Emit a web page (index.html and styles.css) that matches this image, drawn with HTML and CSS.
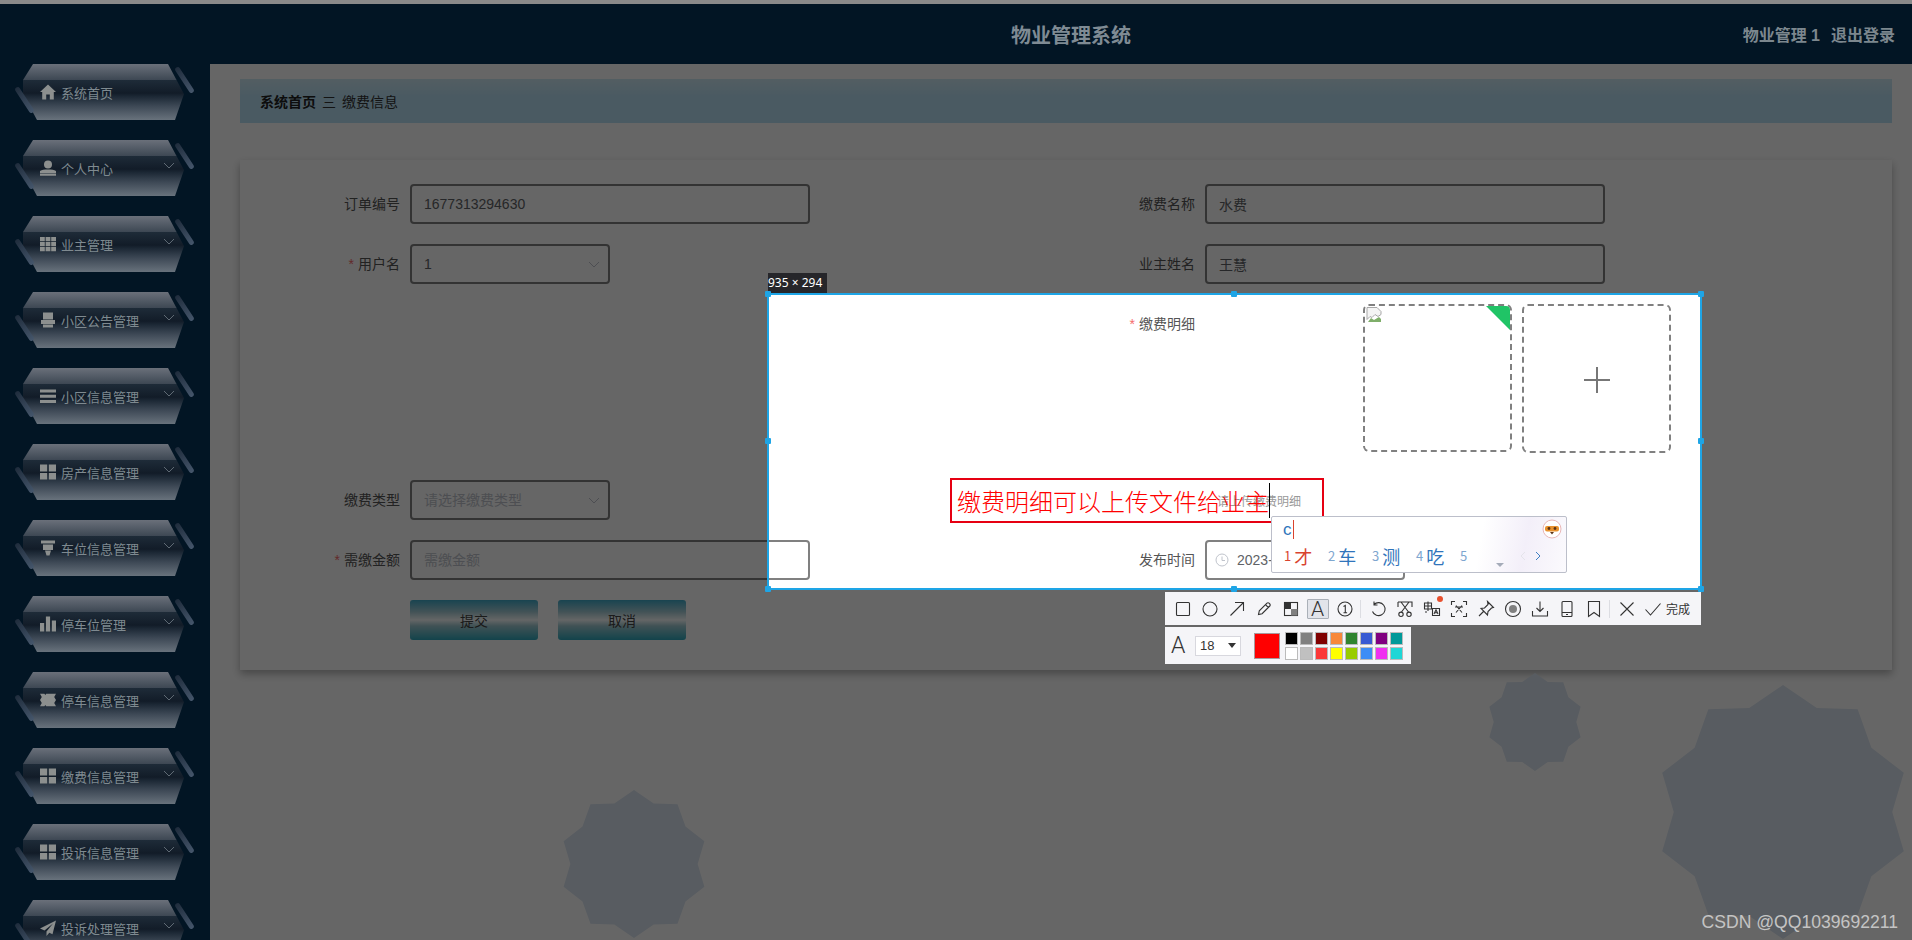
FILE: index.html
```html
<!DOCTYPE html>
<html>
<head>
  <title>物业管理系统</title>
  <link rel="stylesheet" href="styles.css">
</head>
<body>
  <svg class="sprite">
    <symbol id="i-home" viewBox="0 0 16 16"><path d="M8 0.5L0 8h2.2v7.5h4V10.5h3.6v5h4V8H16z"/></symbol>
    <symbol id="i-user" viewBox="0 0 16 16"><circle cx="8" cy="4.5" r="4"/><path d="M0 11c2-1.500 4-1.500 8-1.500s6 0 8 1.500v2H0zM0 13.600h16v2.200H0z"/></symbol>
    <symbol id="i-table" viewBox="0 0 16 16"><path d="M0 1h4.800v4.200H0zM5.600 1h4.800v4.200H5.600zM11.200 1H16v4.200h-4.800zM0 6h4.800v4.200H0zM5.600 6h4.800v4.200H5.600zM11.200 6H16v4.200h-4.800zM0 11h4.800v4.200H0zM5.600 11h4.800v4.200H5.600zM11.200 11H16v4.200h-4.800z"/></symbol>
    <symbol id="i-notice" viewBox="0 0 16 16"><path d="M3 0.500h10v7H3zM1 8h14v4H1zM3 12.500h10v3H3z"/></symbol>
    <symbol id="i-list" viewBox="0 0 16 16"><path d="M0 1.500h16v3H0zM0 6.800h16v3H0zM0 12h16v3H0z"/></symbol>
    <symbol id="i-grid" viewBox="0 0 16 16"><path d="M0 0.500h7.200v7H0zM8.800 0.500H16v7H8.800zM0 9h7.200v6.500H0zM8.800 9H16v6.500H8.800z"/></symbol>
    <symbol id="i-car" viewBox="0 0 16 16"><path d="M1 0.500h14v3H1zM3 4.500h10V10H3zM5 10.500h6L9.500 15.500h-3z"/></symbol>
    <symbol id="i-bars" viewBox="0 0 16 16"><path d="M0 7h4.200v8.500H0zM5.900 0.500h4.200v15H5.900zM11.800 4.500H16v11h-4.200z"/></symbol>
    <symbol id="i-ticket" viewBox="0 0 18 16"><path d="M0 1h5l1 1.500 1-1.500h11l-2 3.500 2 3.500-2 3.500 2 3.500H7l-1-1.500-1 1.500H0l2-3.500L0 8l2-3.500z"/></symbol>
    <symbol id="i-plane" viewBox="0 0 16 16"><path d="M16 0.500L0 8.500l4.500 2L13 3.500 6.500 11.500v4.500l2.800-3.200 3.200 1.400z"/></symbol>
    <symbol id="i-down" viewBox="0 0 12 7"><path d="M1 1l5 5 5-5" fill="none" stroke="currentColor" stroke-width="1"/></symbol>
  </svg>

  <header class="topbar">
    <div class="top-strip"></div>
    <div class="topbar-inner">
      <div class="topbar-title">物业管理系统</div>
      <div class="topbar-user"><span>物业管理 1</span><span>退出登录</span></div>
    </div>
  </header>

  <div class="layout">
    <nav class="sidebar">
      <a class="menu-item"><i class="menu-slash"></i><svg class="menu-icon"><use href="#i-home"/></svg><span>系统首页</span></a>
      <a class="menu-item"><i class="menu-slash"></i><svg class="menu-icon"><use href="#i-user"/></svg><span>个人中心</span><svg class="menu-arrow"><use href="#i-down"/></svg></a>
      <a class="menu-item"><i class="menu-slash"></i><svg class="menu-icon"><use href="#i-table"/></svg><span>业主管理</span><svg class="menu-arrow"><use href="#i-down"/></svg></a>
      <a class="menu-item"><i class="menu-slash"></i><svg class="menu-icon"><use href="#i-notice"/></svg><span>小区公告管理</span><svg class="menu-arrow"><use href="#i-down"/></svg></a>
      <a class="menu-item"><i class="menu-slash"></i><svg class="menu-icon"><use href="#i-list"/></svg><span>小区信息管理</span><svg class="menu-arrow"><use href="#i-down"/></svg></a>
      <a class="menu-item"><i class="menu-slash"></i><svg class="menu-icon"><use href="#i-grid"/></svg><span>房产信息管理</span><svg class="menu-arrow"><use href="#i-down"/></svg></a>
      <a class="menu-item"><i class="menu-slash"></i><svg class="menu-icon"><use href="#i-car"/></svg><span>车位信息管理</span><svg class="menu-arrow"><use href="#i-down"/></svg></a>
      <a class="menu-item"><i class="menu-slash"></i><svg class="menu-icon"><use href="#i-bars"/></svg><span>停车位管理</span><svg class="menu-arrow"><use href="#i-down"/></svg></a>
      <a class="menu-item"><i class="menu-slash"></i><svg class="menu-icon"><use href="#i-ticket"/></svg><span>停车信息管理</span><svg class="menu-arrow"><use href="#i-down"/></svg></a>
      <a class="menu-item"><i class="menu-slash"></i><svg class="menu-icon"><use href="#i-grid"/></svg><span>缴费信息管理</span><svg class="menu-arrow"><use href="#i-down"/></svg></a>
      <a class="menu-item"><i class="menu-slash"></i><svg class="menu-icon"><use href="#i-grid"/></svg><span>投诉信息管理</span><svg class="menu-arrow"><use href="#i-down"/></svg></a>
      <a class="menu-item"><i class="menu-slash"></i><svg class="menu-icon"><use href="#i-plane"/></svg><span>投诉处理管理</span><svg class="menu-arrow"><use href="#i-down"/></svg></a>
    </nav>

    <main class="content">
      <div class="breadcrumb"><b>系统首页</b><span class="crumb-sep">三</span><span>缴费信息</span></div>

      <form class="card">
        <div class="field"><label class="field-label">订单编号</label><input class="text-input" value="1677313294630" readonly></div>
        <div class="field"><label class="field-label">缴费名称</label><input class="text-input" value="水费" readonly></div>

        <div class="field"><label class="field-label"><em>*</em>用户名</label>
          <div class="select-box"><input class="text-input" value="1" readonly><svg class="select-arrow"><use href="#i-down"/></svg></div>
        </div>
        <div class="field"><label class="field-label">业主姓名</label><input class="text-input" value="王慧" readonly></div>

        <div class="field"></div>
        <div class="field field-upload"><label class="field-label"><em>*</em>缴费明细</label>
          <div class="upload-list">
            <div class="upload-card upload-done">
              <svg class="broken-img" viewBox="0 0 16 16"><path d="M1 .5h10l4 4v3l-3 2-3-2-3 3-2-1-3 3z" fill="#f4f4f4" stroke="#a8a8a8"/><path d="M2 15l3-4 3 2 5-3 2 2v3z" fill="#7fae6a"/></svg>
            </div>
            <div class="upload-card upload-add"><span class="plus"></span></div>
          </div>
        </div>

        <div class="field"><label class="field-label">缴费类型</label>
          <div class="select-box"><input class="text-input" placeholder="请选择缴费类型" readonly><svg class="select-arrow"><use href="#i-down"/></svg></div>
        </div>
        <div class="field"><span class="upload-tip">请上传缴费明细</span></div>

        <div class="field"><label class="field-label"><em>*</em>需缴金额</label><input class="text-input" placeholder="需缴金额" readonly></div>
        <div class="field"><label class="field-label">发布时间</label>
          <div class="select-box">
            <svg class="clock" viewBox="0 0 14 14"><circle cx="7" cy="7" r="6" fill="none" stroke="currentColor"/><path d="M7 3.500V7.500h3" fill="none" stroke="currentColor"/></svg>
            <input class="text-input date-input" value="2023-02-25 16:21:34" readonly>
          </div>
        </div>

        <div class="form-actions">
          <button class="glass-btn" type="button">提交</button>
          <button class="glass-btn" type="button">取消</button>
        </div>
      </form>
    </main>
  </div>

  <div class="star star-a"></div>
  <div class="star star-b"></div>
  <div class="star star-c"></div>

  <!-- screenshot tool on top of the page -->
  <div class="selection">
    <div class="size-tag">935 × 294</div>
    <i class="handle h-tl"></i><i class="handle h-tm"></i><i class="handle h-tr"></i>
    <i class="handle h-ml"></i><i class="handle h-mr"></i>
    <i class="handle h-bl"></i><i class="handle h-bm"></i><i class="handle h-br"></i>

    <div class="annotation"><span class="annotation-text">缴费明细可以上传文件给业主</span></div>

    <div class="ime">
      <div class="ime-input"><span>c</span></div>
      <div class="ime-candidates">
        <span class="cand cand-first"><small>1</small>才</span>
        <span class="cand"><small>2</small>车</span>
        <span class="cand"><small>3</small>测</span>
        <span class="cand"><small>4</small>吃</span>
        <span class="cand"><small>5</small></span>
      </div>
      <i class="ime-more"></i>
      <svg class="ime-prev" viewBox="0 0 6 10"><path d="M5 1L1 5l4 4" fill="none" stroke="#e4e4ea"/></svg>
      <svg class="ime-next" viewBox="0 0 6 10"><path d="M1 1l4 4-4 4" fill="none" stroke="#3f7fc4"/></svg>
      <svg class="ime-logo" viewBox="0 0 20 20">
        <circle cx="10" cy="10" r="9" fill="#fff" stroke="#e9b7b7"/>
        <rect x="3" y="7" width="14" height="5.500" rx="2" fill="#e8912d"/>
        <circle cx="7" cy="9.500" r="1.400" fill="#5b3416"/><circle cx="13" cy="9.500" r="1.400" fill="#5b3416"/>
        <path d="M8 13h4l-2 2.500z" fill="#5b3416"/>
      </svg>
    </div>

    <div class="toolbar">
      <span class="tool"><svg viewBox="0 0 18 18"><rect x="2.500" y="2.500" width="13" height="13" rx="1"/></svg></span>
      <span class="tool"><svg viewBox="0 0 18 18"><circle cx="9" cy="9" r="7"/></svg></span>
      <span class="tool"><svg viewBox="0 0 18 18"><path d="M2.500 15.500L15.500 2.500M7 2.500h8.500V11"/></svg></span>
      <span class="tool"><svg viewBox="0 0 18 18"><path d="M3.500 14.500l.8-3.600 7.700-7.700a1.400 1.400 0 0 1 2 0l.8.800a1.400 1.400 0 0 1 0 2l-7.700 7.700zM10.500 4.700l2.800 2.800"/></svg></span>
      <span class="tool"><svg viewBox="0 0 18 18"><rect x="2.500" y="2.500" width="13" height="13"/><path class="solid" d="M2.500 2.500H9V9H2.500z"/><path class="solid-grey" d="M9 9h6.500v6.500H9z"/></svg></span>
      <span class="tool tool-active">A</span>
      <span class="tool"><svg viewBox="0 0 18 18"><circle cx="9" cy="9" r="7"/><path d="M7.500 6.500L9.300 5.500V12.800M7.500 12.800h3.600"/></svg></span>
      <i class="tool-divider"></i>
      <span class="tool"><svg viewBox="0 0 18 18"><path d="M5 4.500a6.500 6.500 0 1 1-1.500 7M5 1.500v3.500h3.500"/></svg></span>
      <span class="tool"><svg viewBox="0 0 18 18"><path d="M2 2h14v5M2 2v5M5 2l7.500 10M13 2L5.500 12"/><circle cx="5" cy="14.300" r="2.200"/><circle cx="13" cy="14.300" r="2.200"/></svg></span>
      <span class="tool tool-badge"><svg viewBox="0 0 18 18"><path d="M1.500 3h7v6h-7zM5 1.500V11M1.500 6h7M2 12h2M9.500 8.500h7v7h-7z"/><path d="M11 14l2-4.200 2 4.200M11.700 12.800h2.600"/></svg></span>
      <span class="tool"><svg viewBox="0 0 18 18"><path d="M1.500 5V1.500H5M13 1.500h3.500V5M16.500 13v3.500H13M5 16.500H1.500V13M6 5.500l6 7M12 5.500l-6 7M5 7h8"/></svg></span>
      <span class="tool"><svg viewBox="0 0 18 18"><path d="M10.500 1.500l6 6-2 .5-3.500 3.500-.5 3.500-6.500-6.500 3.500-.5L11 4.500zM6.500 11.500L2 16"/></svg></span>
      <span class="tool"><svg viewBox="0 0 18 18"><circle cx="9" cy="9" r="7.500"/><circle class="solid-grey" cx="9" cy="9" r="4"/></svg></span>
      <span class="tool"><svg viewBox="0 0 18 18"><path d="M9 1.500v10M5.500 8L9 11.500 12.500 8M1.500 11v5h15v-5"/></svg></span>
      <span class="tool"><svg viewBox="0 0 18 18"><rect x="4" y="1.500" width="10" height="15" rx="1"/><path d="M4 12.500h10M8 14.500h2"/></svg></span>
      <span class="tool"><svg viewBox="0 0 18 18"><path d="M3.500 1.500h11v15L9 12.500l-5.500 4z"/></svg></span>
      <i class="tool-divider"></i>
      <span class="tool"><svg viewBox="0 0 18 18"><path d="M2.500 2.500l13 13M15.500 2.500l-13 13"/></svg></span>
      <span class="tool tool-done"><svg viewBox="0 0 18 18"><path d="M1.500 9.500l5 5.500L16.500 3.500"/></svg>完成</span>
    </div>

    <div class="text-options">
      <span class="option-letter">A</span>
      <span class="size-select">18<i></i></span>
      <span class="color-current"></span>
      <div class="palette">
        <i class="c-black"></i><i class="c-grey"></i><i class="c-maroon"></i><i class="c-orange"></i><i class="c-green"></i><i class="c-blue"></i><i class="c-purple"></i><i class="c-teal"></i>
        <i class="c-white"></i><i class="c-silver"></i><i class="c-red"></i><i class="c-yellow"></i><i class="c-lime"></i><i class="c-sky"></i><i class="c-pink"></i><i class="c-cyan"></i>
      </div>
    </div>
  </div>

  <div class="watermark">CSDN @QQ1039692211</div>
</body>
</html>
```

FILE: styles.css
```css
body {
  position: relative;
  margin: 0;
  height: 940px;
  overflow: hidden;
  background-color: #fff;
  font-family: "Liberation Sans", "Noto Sans CJK SC", sans-serif;
  font-size: 14px;
  color: #555;
}

.sprite {
  display: none;
}

/* Header */
.topbar {
  position: relative;
  z-index: 3;
  background-color: #021524;
}

.top-strip {
  height: 4px;
  background-color: #8a8a8a;
}

.topbar-inner {
  display: flex;
  align-items: center;
  justify-content: center;
  height: 60px;
  padding-left: 230px;
  box-sizing: border-box;
}

.topbar-title {
  font-size: 20px;
  font-weight: bold;
  color: #7f8b94;
}

.topbar-user {
  position: absolute;
  right: 17px;
  top: 22px;
  display: flex;
  gap: 11px;
  font-size: 16px;
  font-weight: bold;
  color: #7c878e;
}

.layout {
  display: flex;
}

/* Sidebar */
.sidebar {
  position: relative;
  z-index: 3;
  display: flex;
  flex-direction: column;
  flex: none;
  gap: 20px;
  width: 210px;
  height: 876px;
  padding-left: 22px;
  box-sizing: border-box;
  overflow: hidden;
  background-color: #021524;
}

.menu-item {
  position: relative;
  z-index: 0;
  display: flex;
  flex: none;
  align-items: center;
  gap: 5px;
  width: 163px;
  height: 56px;
  padding: 0 10px 0 18px;
  box-sizing: border-box;
  font-size: 13px;
  color: #7f8a90;
}

.menu-item::before {
  content: "";
  position: absolute;
  inset: 0;
  z-index: -1;
  background: linear-gradient(#6a707a, #3e4854 28%, #1e2b38 29%, #121c28 52%, #1c2835 58%, #3d4855 75%, #68727c);
  clip-path: polygon(11px 0, 146px 0, 162px 30px, 153px 100%, 15px 100%, 1px 30px, 1px 16px);
}

.menu-item::after,
.menu-slash {
  content: "";
  position: absolute;
  width: 5px;
  height: 30px;
  border-radius: 3px;
  background: linear-gradient(#1f2c3c, #45566b);
}

.menu-item::after {
  left: 0;
  top: 21px;
  transform: rotate(-33deg);
}

.menu-slash {
  left: 160px;
  top: 1px;
  transform: rotate(-33deg);
}

.menu-icon {
  flex: none;
  width: 16px;
  height: 16px;
  fill: #8c8f8e;
}

.menu-arrow {
  width: 12px;
  height: 7px;
  margin-left: auto;
  margin-bottom: 6px;
  color: #5f6a74;
}

/* Main content, bright colours get dimmed by the selection shadow */
.content {
  flex: 1;
  padding: 15px 20px 0 30px;
}

.breadcrumb {
  display: flex;
  align-items: center;
  height: 44px;
  padding-left: 20px;
  margin-bottom: 37px;
  background: linear-gradient(#cfeaf4, #b9e1f5 40%);
  color: #333;
}

.breadcrumb b {
  color: #222;
}

.crumb-sep {
  margin: 0 6px;
}

.card {
  position: relative;
  display: grid;
  grid-template-columns: 795px 795px;
  row-gap: 20px;
  padding: 24px 0 30px;
  background-color: #fff;
  box-shadow: 0 4px 8px rgba(0, 0, 0, 0.3);
}

.field {
  display: flex;
  align-items: center;
  gap: 10px;
  min-height: 40px;
}

.field-label {
  flex: none;
  width: 160px;
  text-align: right;
  line-height: 40px;
}

.field-label em {
  margin-right: 4px;
  font-style: normal;
  color: #f56c6c;
}

.text-input {
  width: 400px;
  height: 40px;
  padding: 0 12px;
  box-sizing: border-box;
  border: 2px solid #808080;
  border-radius: 4px;
  outline: none;
  background-color: #fff;
  font-family: inherit;
  font-size: 14px;
  color: #606266;
}

.text-input::placeholder {
  color: #c0c4cc;
}

.select-box {
  position: relative;
  width: 200px;
}

.select-box .text-input {
  width: 100%;
}

.select-arrow {
  position: absolute;
  right: 10px;
  top: 17px;
  width: 12px;
  height: 7px;
  color: #c0c4cc;
}

.clock {
  position: absolute;
  left: 10px;
  top: 13px;
  width: 14px;
  height: 14px;
  color: #c0c4cc;
}

.date-input {
  padding-left: 30px;
}

.field-upload {
  align-items: flex-start;
  padding-bottom: 7px;
}

.upload-list {
  display: flex;
  gap: 10px;
  margin-left: 158px;
}

.upload-card {
  position: relative;
  width: 149px;
  height: 148px;
  box-sizing: border-box;
  border: 2px dashed #808080;
  border-radius: 6px;
  overflow: hidden;
}

.upload-done::after {
  content: "";
  position: absolute;
  right: -2px;
  top: -2px;
  width: 28px;
  height: 28px;
  background-color: #20c466;
  clip-path: polygon(0 0, 100% 0, 100% 100%);
}

.broken-img {
  position: absolute;
  left: 1px;
  top: 1px;
  width: 16px;
  height: 16px;
}

.upload-add {
  display: flex;
  align-items: center;
  justify-content: center;
  height: 149px;
}

.plus {
  position: relative;
  top: 1px;
  width: 26px;
  height: 2px;
  background-color: #777;
}

.plus::after {
  content: "";
  position: absolute;
  left: 12px;
  top: -12px;
  width: 2px;
  height: 26px;
  background-color: #777;
}

.upload-tip {
  padding-left: 182px;
  font-size: 12px;
  color: #999;
}

.form-actions {
  display: flex;
  grid-column: 1 / -1;
  gap: 20px;
  padding-left: 170px;
}

.glass-btn {
  width: 128px;
  height: 40px;
  border: none;
  border-radius: 3px;
  background: linear-gradient(#3fa9c8, #a8cfd8 30%, #fbffff 50%, #a0ccd4 65%, #2fa8bc);
  font-family: inherit;
  font-size: 14px;
  color: #444;
}

/* Background stars */
.star {
  position: absolute;
  background-color: #dce6f2;
  clip-path: polygon(50% 0, 63.29% 9.1%, 79.39% 9.55%, 84.79% 24.73%, 97.55% 34.55%, 93% 50%, 97.55% 65.45%, 84.79% 75.27%, 79.39% 90.45%, 63.29% 90.9%, 50% 100%, 36.71% 90.9%, 20.61% 90.45%, 15.21% 75.27%, 2.45% 65.45%, 7% 50%, 2.45% 34.55%, 15.21% 24.73%, 20.61% 9.55%, 36.71% 9.1%);
}

.star-a {
  left: 560px;
  top: 790px;
  width: 148px;
  height: 148px;
}

.star-b {
  left: 1487px;
  top: 673px;
  width: 96px;
  height: 98px;
}

.star-c {
  left: 1656px;
  top: 685px;
  width: 254px;
  height: 254px;
}

/* Screenshot selection: the big shadow dims everything around the hole */
.selection {
  position: absolute;
  z-index: 2;
  left: 767px;
  top: 293px;
  width: 931px;
  height: 293px;
  border: 2px solid #1ea5e6;
  box-shadow: 0 0 0 3000px rgba(0, 0, 0, 0.6);
}

.size-tag {
  position: absolute;
  left: -1px;
  top: -22px;
  width: 59px;
  height: 20px;
  background-color: #26262a;
  font-family: "Noto Sans", sans-serif;
  font-size: 12px;
  line-height: 20px;
  white-space: nowrap;
  color: #fff;
}

.handle {
  position: absolute;
  width: 6px;
  height: 6px;
  border-radius: 1px;
  background-color: #1ea5e6;
}

.h-tl { left: -4px; top: -4px; }
.h-tm { left: 462px; top: -4px; }
.h-tr { right: -4px; top: -4px; }
.h-ml { left: -4px; top: 143px; }
.h-mr { right: -4px; top: 143px; }
.h-bl { left: -4px; bottom: -4px; }
.h-bm { left: 462px; bottom: -4px; }
.h-br { right: -4px; bottom: -4px; }

.annotation {
  position: absolute;
  left: 181px;
  top: 183px;
  width: 374px;
  height: 45px;
  padding-left: 5px;
  box-sizing: border-box;
  border: 2px solid #e60012;
  font-family: "Noto Sans CJK SC", sans-serif;
  font-size: 24px;
  font-weight: 300;
  line-height: 41px;
  white-space: nowrap;
  color: #f00;
}

.annotation-text {
  border-right: 1px solid #000;
}

/* Input method popup */
.ime {
  position: absolute;
  left: 502px;
  top: 221px;
  width: 296px;
  height: 57px;
  box-sizing: border-box;
  border: 1px solid #bcbfca;
  border-radius: 2px;
  background: linear-gradient(100deg, #fff 70%, #f3eff9 85%, #fbfafd);
  color: #2f74bb;
}

.ime-input {
  height: 24px;
  padding: 3px 0 0 11px;
  font-size: 17px;
  line-height: 20px;
}

.ime-input span {
  padding-right: 1px;
  border-right: 1px solid #d9432f;
}

.ime-candidates {
  display: flex;
  gap: 13px;
  padding-left: 12px;
  font-family: "Noto Sans CJK SC", sans-serif;
  font-size: 18px;
  line-height: 24px;
}

.cand {
  display: flex;
  align-items: center;
  gap: 3px;
  min-width: 31px;
}

.cand small {
  font-size: 13px;
  color: #7ea6cf;
}

.cand-first,
.cand-first small {
  color: #d9432f;
}

.ime-more {
  position: absolute;
  left: 224px;
  top: 46px;
  width: 0;
  height: 0;
  border-left: 4px solid transparent;
  border-right: 4px solid transparent;
  border-top: 4px solid #a5acb9;
}

.ime-prev,
.ime-next {
  position: absolute;
  top: 34px;
  width: 6px;
  height: 10px;
}

.ime-prev { left: 248px; }
.ime-next { left: 263px; }

.ime-logo {
  position: absolute;
  left: 270px;
  top: 2px;
  width: 20px;
  height: 20px;
}

/* Screenshot toolbars */
.toolbar {
  position: absolute;
  left: 396px;
  top: 297px;
  display: flex;
  align-items: center;
  width: 536px;
  height: 33px;
  padding-left: 4px;
  box-sizing: border-box;
  background-color: #f5f5f8;
}

.tool {
  display: flex;
  flex: none;
  align-items: center;
  justify-content: center;
  width: 27px;
  height: 20px;
  box-sizing: border-box;
  font-family: Roboto, sans-serif;
  font-size: 21px;
  font-weight: 300;
  color: #333;
}

.tool svg {
  width: 18px;
  height: 18px;
  fill: none;
  stroke: #333;
  stroke-width: 1.1;
}

.tool .solid {
  fill: #333;
  stroke: none;
}

.tool .solid-grey {
  fill: #808080;
  stroke: none;
}

.tool-active {
  width: 22px;
  margin: 0 2.500px;
  border: 1px solid #aab0b8;
  border-radius: 1px;
  background-color: #e2e4ea;
  line-height: 18px;
}

.tool-badge {
  position: relative;
}

.tool-badge::after {
  content: "";
  position: absolute;
  right: 2px;
  top: -3px;
  width: 6px;
  height: 6px;
  border-radius: 50%;
  background-color: #e8502e;
}

.tool-divider {
  flex: none;
  width: 1px;
  height: 18px;
  margin: 0 3px 0 2px;
  background-color: #dcdde2;
}

.tool-done {
  gap: 4px;
  width: auto;
  margin-left: 4px;
  font-family: "Noto Sans CJK SC", sans-serif;
  font-size: 12px;
  font-weight: 400;
}

.text-options {
  position: absolute;
  left: 396px;
  top: 332px;
  display: flex;
  align-items: center;
  width: 246px;
  height: 37px;
  padding-left: 6px;
  box-sizing: border-box;
  background-color: #f5f5f8;
}

.option-letter {
  width: 24px;
  font-family: Roboto, sans-serif;
  font-size: 23px;
  font-weight: 300;
  color: #333;
}

.size-select {
  display: flex;
  align-items: center;
  justify-content: space-between;
  width: 46px;
  height: 20px;
  padding: 0 4px;
  box-sizing: border-box;
  border: 1px solid #d8d8de;
  background-color: #fff;
  font-size: 13px;
  color: #333;
}

.size-select i {
  width: 0;
  height: 0;
  border-left: 4px solid transparent;
  border-right: 4px solid transparent;
  border-top: 5px solid #333;
}

.color-current {
  width: 24px;
  height: 24px;
  margin: 0 5px 0 13px;
  border: 1px solid #a8989c;
  background-color: #f00;
}

.palette {
  display: grid;
  grid-template-columns: repeat(8, 13px);
  gap: 2px;
}

.palette i {
  height: 13px;
  box-sizing: border-box;
  border: 1px solid #bbb;
}

.c-black { background-color: #000; }
.c-grey { background-color: #808080; }
.c-maroon { background-color: #800000; }
.c-orange { background-color: #f7883a; }
.c-green { background-color: #308430; }
.c-blue { background-color: #385ad3; }
.c-purple { background-color: #800080; }
.c-teal { background-color: #009999; }
.c-white { background-color: #fff; }
.c-silver { background-color: #c0c0c0; }
.c-red { background-color: #fb3838; }
.c-yellow { background-color: #ff0; }
.c-lime { background-color: #9c0; }
.c-sky { background-color: #3d8df5; }
.c-pink { background-color: #f030f0; }
.c-cyan { background-color: #1ed6d6; }

.watermark {
  position: absolute;
  z-index: 3;
  right: 14px;
  top: 912px;
  font-size: 17.600px;
  line-height: 20px;
  color: #c4c4c4;
}
```
